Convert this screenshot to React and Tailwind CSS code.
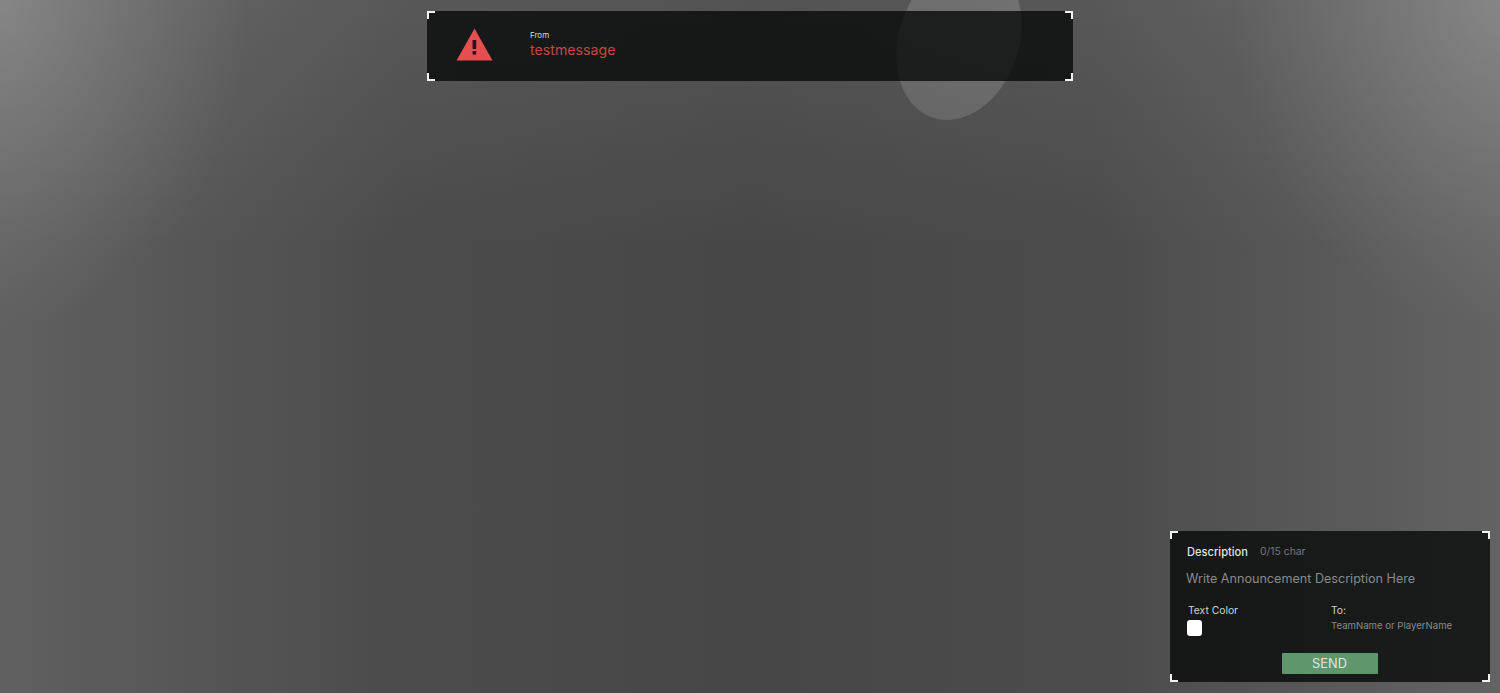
import React from 'react';

const Corners = () => (
  <>
    <span className="absolute left-0 top-0 h-2 w-2 border-l-2 border-t-2 border-[#f2f2f2]" />
    <span className="absolute right-0 top-0 h-2 w-2 border-r-2 border-t-2 border-[#f2f2f2]" />
    <span className="absolute bottom-0 left-0 h-2 w-2 border-b-2 border-l-2 border-[#f2f2f2]" />
    <span className="absolute bottom-0 right-0 h-2 w-2 border-b-2 border-r-2 border-[#f2f2f2]" />
  </>
);

const WarningIcon = () => (
  <svg width="37" height="33" viewBox="0 0 37 33" className="shrink-0">
    <path d="M18.5 0.5 L36.5 32.5 L0.5 32.5 Z" fill="#e54f4f" />
    <rect x="16.6" y="12" width="3.6" height="9" fill="#1a1b1b" />
    <rect x="16.6" y="23" width="3.6" height="3.6" fill="#1a1b1b" />
  </svg>
);

const App = () => {
  return (
    <div className="relative flex h-[693px] w-full flex-col justify-between overflow-hidden bg-[radial-gradient(ellipse_250px_330px_at_0_0,#ffffff2e,#ffffff00),radial-gradient(ellipse_270px_330px_at_100%_0,#ffffff2a,#ffffff00),linear-gradient(to_bottom,#ffffff12,#ffffff00_250px),linear-gradient(to_right,#5f605f,#4a4b4a_27%,#464746_50%,#4a4b4a_73%,#626362)] py-[11px] font-['Inter','Liberation_Sans',sans-serif]">
      {/* moon behind the banner */}
      <div className="absolute left-[899px] top-[-42px] h-[164px] w-[120px] rotate-[19deg] rounded-[50%] bg-[linear-gradient(to_bottom,#727372,#666766)]" />

      <div className="relative mx-auto flex h-[70px] w-[646px] items-center bg-[#030404]/75 pl-[29px]">
        <Corners />
        <div className="-mt-[4px]">
          <WarningIcon />
        </div>
        <div className="-mt-[4px] ml-[37px] flex flex-col">
          <span className="text-[8px] leading-[10px] text-[#d8d8d8]">From</span>
          <span className="mt-[1px] text-[14.2px] leading-[18px] text-[#c44646]">testmessage</span>
        </div>
      </div>

      <div className="relative mr-[10px] flex h-[151px] w-[320px] flex-col self-end bg-[#030404]/75 pl-[16px] pr-[17px] pt-[14px]">
        <Corners />
        <div className="ml-[1px] flex items-center leading-[14px]">
          <span className="text-[11.1px] font-medium text-[#e2e2e2]">Description</span>
          <span className="ml-[12px] text-[10.4px] text-[#777]">0/15 char</span>
        </div>
        <div className="mt-[12px] text-[12.6px] leading-[16px] text-[#8a8a8a]">Write Announcement Description Here</div>
        <div className="mt-[16px] flex">
          <div className="w-[145px]">
            <div className="ml-[2px] text-[10.3px] leading-[14px] text-[#d0d0d0]">Text Color</div>
            <div className="ml-[1px] mt-[3px] h-4 w-[15px] rounded-[3px] bg-white" />
          </div>
          <div>
            <div className="text-[10.3px] leading-[14px] text-[#d0d0d0]">To:</div>
            <div className="mt-[2px] text-[9.6px] leading-[14px] text-[#8a8a8a]">TeamName or PlayerName</div>
          </div>
        </div>
        <button className="mx-auto mt-[17px] h-[21px] w-[96px] rounded-[1px] bg-[#5f966b] text-[12.8px] leading-[21px] text-[#e4e4e4]">SEND</button>
      </div>
    </div>
  );
};

export default App;
